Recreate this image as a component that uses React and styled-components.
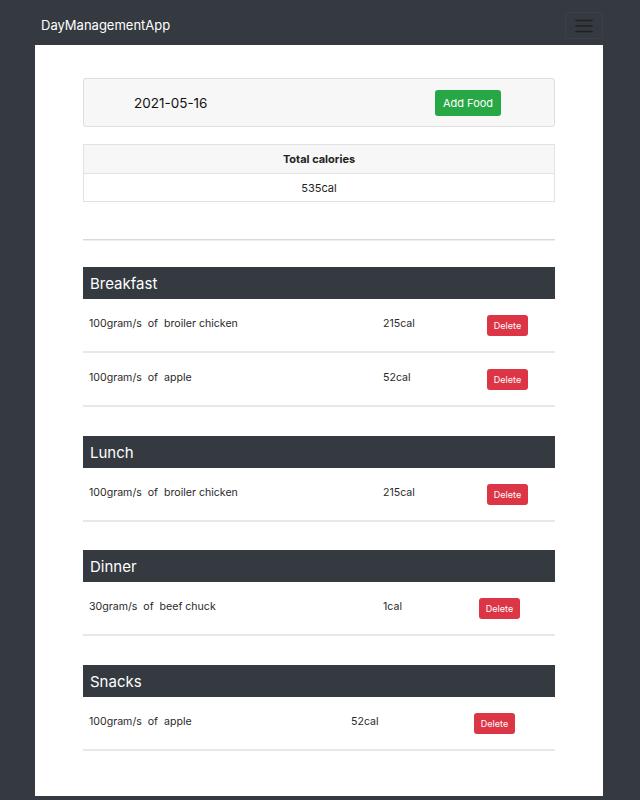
import React from "react";
import styled, { createGlobalStyle } from "styled-components";

const Global = createGlobalStyle`
  html, body { margin: 0; padding: 0; background: #343a40; }
  body { font-family: Inter, "Liberation Sans", sans-serif; color: #212529; }
`;

const Navbar = styled.nav`
  height: 45px;
  display: flex;
  align-items: center;
  justify-content: space-between;
  padding: 6px 37px 0 41px;
  box-sizing: border-box;
`;

const Brand = styled.span`
  color: #fff;
  font-size: 13px;
  line-height: 1;
`;

const Toggler = styled.button`
  width: 38px;
  height: 27px;
  background: transparent;
  border: 1px solid rgba(255, 255, 255, 0.04);
  border-radius: 4px;
  display: flex;
  align-items: center;
  justify-content: center;
  padding: 0;
`;

const Panel = styled.main`
  margin-left: 35px;
  width: 568px;
  min-height: 751px;
  background: #fff;
  box-sizing: border-box;
  padding: 33px 48px 44px;
`;

const DateCard = styled.div`
  height: 49px;
  box-sizing: border-box;
  border: 1px solid #dedede;
  border-radius: 3px;
  background: #f7f7f7;
  display: flex;
  align-items: center;
  padding: 0 53px 0 50px;
`;

const DateText = styled.span`
  font-size: 13.5px;
  color: #111;
`;

const Button = styled.button`
  font-family: inherit;
  border: none;
  color: #fff;
  border-radius: 3px;
  padding: 0;
  background: ${(p) => p.$bg};
  width: ${(p) => p.$w}px;
  height: ${(p) => p.$h}px;
  font-size: ${(p) => p.$fs}px;
  margin-left: ${(p) => (p.$push ? "auto" : "0")};
`;

const TotalTable = styled.div`
  margin-top: 17px;
  border: 1px solid #e2e2e2;
`;

const TotalCell = styled.div`
  height: 28px;
  display: flex;
  align-items: center;
  justify-content: center;
  font-size: 11px;
  font-weight: ${(p) => (p.$head ? 700 : 400)};
  background: ${(p) => (p.$head ? "#f7f7f7" : "#fff")};
  border-top: ${(p) => (p.$head ? "none" : "1px solid #e2e2e2")};
  color: #222;
  box-sizing: border-box;
`;

const Divider = styled.hr`
  margin: 37px 0 0;
  border: none;
  border-top: 1px solid #d9d9d9;
  border-bottom: 1px solid #efefef;
  height: 0;
`;

const Section = styled.section`
  margin-top: ${(p) => p.$gap}px;
`;

const SectionHead = styled.h2`
  margin: 0;
  height: 32px;
  background: #343a40;
  color: #fff;
  font-size: 15px;
  font-weight: 400;
  display: flex;
  align-items: center;
  padding-left: 7px;
`;

const Row = styled.div`
  display: grid;
  grid-template-columns: ${(p) => p.$cols};
  align-items: center;
  height: 54px;
  box-sizing: border-box;
  border-bottom: 2px solid #e7e8ea;
  font-size: 10.6px;
  color: #2a2a2a;
`;

const Desc = styled.span`
  padding-left: 6px;
  white-space: pre;
  margin-top: -3px;
`;

const Cal = styled.span`
  margin-top: -3px;
`;

const HamburgerIcon = () => (
  <svg width="18" height="14" viewBox="0 0 18 14">
    <g stroke="#1e2226" strokeWidth="1.6" strokeLinecap="round">
      <line x1="1" y1="1.5" x2="17" y2="1.5" />
      <line x1="1" y1="7" x2="17" y2="7" />
      <line x1="1" y1="12.5" x2="17" y2="12.5" />
    </g>
  </svg>
);

const meals = [
  {
    name: "Breakfast",
    gap: 26,
    cols: "300px 104px 1fr",
    items: [
      { text: "100gram/s\u00a0 of\u00a0 broiler chicken", cal: "215cal" },
      { text: "100gram/s\u00a0 of\u00a0 apple", cal: "52cal" },
    ],
  },
  {
    name: "Lunch",
    gap: 29,
    cols: "300px 104px 1fr",
    items: [{ text: "100gram/s\u00a0 of\u00a0 broiler chicken", cal: "215cal" }],
  },
  {
    name: "Dinner",
    gap: 28,
    cols: "300px 96px 1fr",
    items: [{ text: "30gram/s\u00a0 of\u00a0 beef chuck", cal: "1cal" }],
  },
  {
    name: "Snacks",
    gap: 29,
    cols: "268px 123px 1fr",
    items: [{ text: "100gram/s\u00a0 of\u00a0 apple", cal: "52cal" }],
  },
];

export default function App() {
  return (
    <>
      <Global />
      <Navbar>
        <Brand>DayManagementApp</Brand>
        <Toggler aria-label="menu">
          <HamburgerIcon />
        </Toggler>
      </Navbar>
      <Panel>
        <DateCard>
          <DateText>2021-05-16</DateText>
          <Button $bg="#28a745" $w={66} $h={26} $fs={11} $push>
            Add Food
          </Button>
        </DateCard>
        <TotalTable>
          <TotalCell $head>Total calories</TotalCell>
          <TotalCell>535cal</TotalCell>
        </TotalTable>
        <Divider />
        {meals.map((m) => (
          <Section key={m.name} $gap={m.gap}>
            <SectionHead>{m.name}</SectionHead>
            {m.items.map((it, j) => (
              <Row key={j} $cols={m.cols}>
                <Desc>{it.text}</Desc>
                <Cal>{it.cal}</Cal>
                <div>
                  <Button $bg="#dc3545" $w={41} $h={21} $fs={9}>
                    Delete
                  </Button>
                </div>
              </Row>
            ))}
          </Section>
        ))}
      </Panel>
    </>
  );
}
